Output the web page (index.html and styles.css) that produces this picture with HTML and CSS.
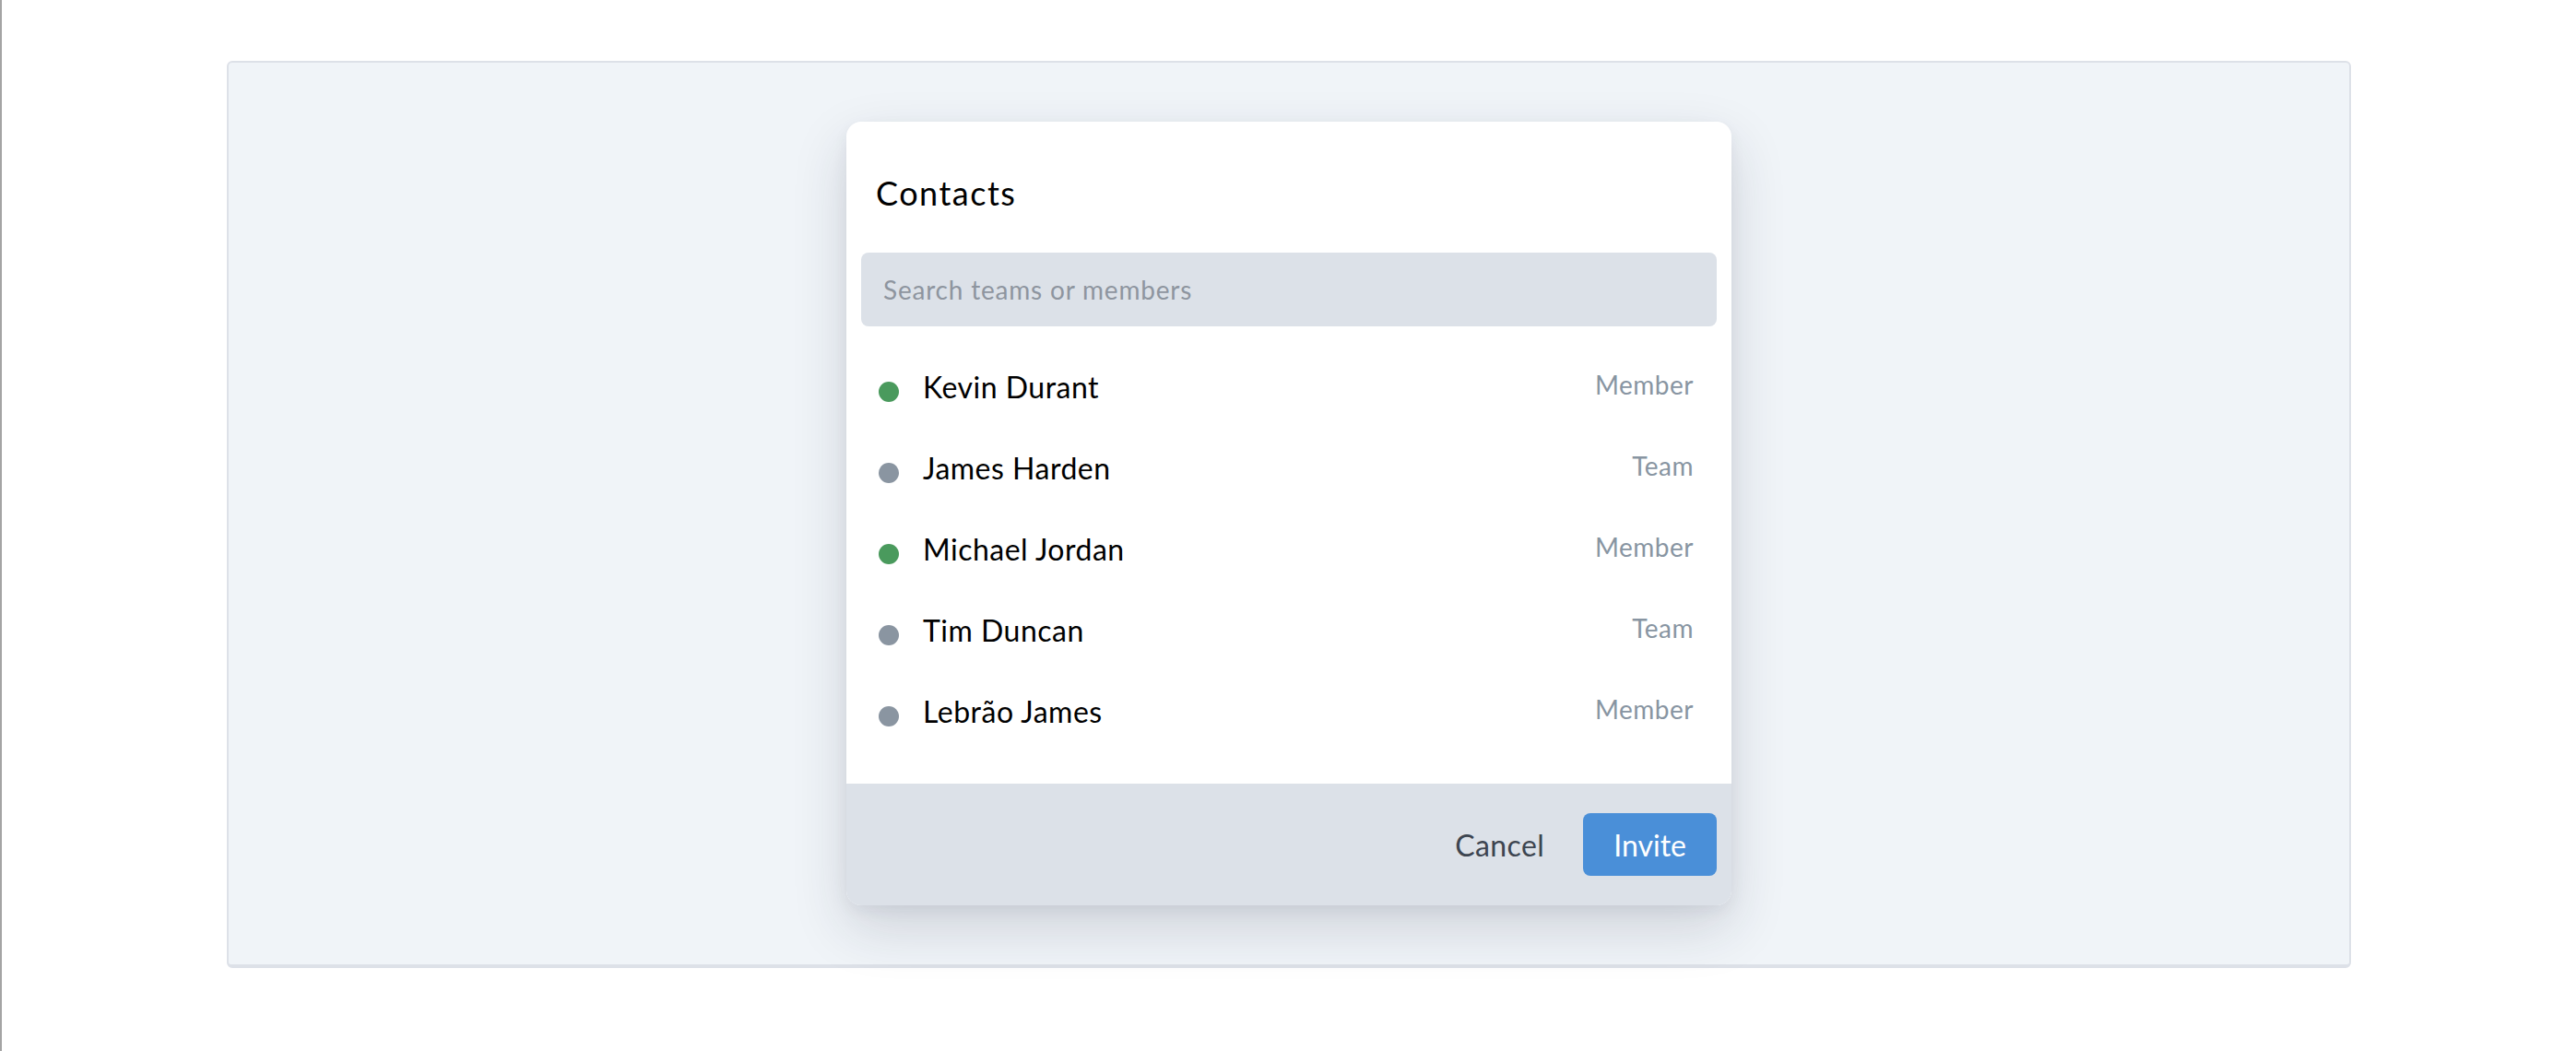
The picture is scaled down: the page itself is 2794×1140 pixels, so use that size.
FILE: index.html
```html
<!DOCTYPE html>
<html lang="en">
<head>
<meta charset="utf-8">
<title>Contacts</title>
<link rel="stylesheet" href="styles.css">
</head>
<body>
<div class="page">
  <div class="panel">
    <div class="modal">
      <h2 class="modal-title">Contacts</h2>
      <input class="search" type="text" placeholder="Search teams or members">
      <ul class="list">
        <li class="row"><span class="dot dot-online"></span><span class="name">Kevin Durant</span><span class="role">Member</span></li>
        <li class="row"><span class="dot dot-offline"></span><span class="name">James Harden</span><span class="role">Team</span></li>
        <li class="row"><span class="dot dot-online"></span><span class="name">Michael Jordan</span><span class="role">Member</span></li>
        <li class="row"><span class="dot dot-offline"></span><span class="name">Tim Duncan</span><span class="role">Team</span></li>
        <li class="row"><span class="dot dot-offline"></span><span class="name">Lebrão James</span><span class="role">Member</span></li>
      </ul>
      <div class="footer">
        <button class="btn-cancel" type="button">Cancel</button>
        <button class="btn-invite" type="button">Invite</button>
      </div>
    </div>
  </div>
</div>
</body>
</html>
```
FILE: styles.css
```css
html, body {
  margin: 0;
  padding: 0;
  background: #ffffff;
}
body {
  font-family: Lato, "Open Sans", "Noto Sans", sans-serif;
  color: #000;
}
.page {
  box-sizing: border-box;
  min-height: 1140px;
  border-left: 2px solid #a4a4a4;
  padding-top: 66px;
}
.panel {
  box-sizing: border-box;
  width: 2304px;
  margin: 0 auto;
  background: #f0f4f8;
  border: 2px solid #dde1e8;
  border-bottom-width: 4px;
  border-radius: 6px;
  padding: 64px 0;
}
.modal {
  width: 960px;
  margin: 0 auto;
  background: #ffffff;
  border-radius: 16px;
  overflow: hidden;
  box-shadow: 0 24px 60px rgba(30, 40, 60, 0.16), 0 6px 16px rgba(30, 40, 60, 0.06);
}
.modal-title {
  margin: 0;
  padding: 50px 32px 38px;
  font-size: 36px;
  line-height: 54px;
  font-weight: 400;
  letter-spacing: 1.5px;
  color: #000;
}
.search {
  display: block;
  box-sizing: border-box;
  width: 928px;
  height: 80px;
  margin: 0 16px;
  padding: 0 24px;
  border: none;
  outline: none;
  border-radius: 8px;
  background: #dce1e8;
  font-family: inherit;
  font-size: 28px;
  letter-spacing: 0.8px;
  color: #333;
}
.search::placeholder {
  color: #8e959f;
}
.list {
  list-style: none;
  margin: 0;
  padding: 23px 0 33px;
}
.row {
  display: flex;
  align-items: center;
  height: 88px;
  padding: 0 41px 0 35px;
}
.dot {
  flex: none;
  width: 22px;
  height: 22px;
  border-radius: 50%;
  margin-top: 8px;
  margin-right: 26px;
}
.dot-online {
  background: #4a9a5d;
}
.dot-offline {
  background: #8a95a1;
}
.name {
  font-size: 32px;
  letter-spacing: 0.5px;
  margin-bottom: 4px;
  color: #000;
}
.role {
  margin-left: auto;
  margin-bottom: 8px;
  font-size: 28px;
  letter-spacing: 0.5px;
  color: #8895a2;
}
.footer {
  display: flex;
  justify-content: flex-end;
  align-items: center;
  padding: 32px 16px;
  background: #dce1e8;
}
.btn-cancel {
  font-family: inherit;
  font-size: 32px;
  letter-spacing: 0.4px;
  color: #3d4550;
  background: none;
  border: none;
  padding: 0;
  margin-right: 42px;
  cursor: pointer;
}
.btn-invite {
  font-family: inherit;
  font-size: 32px;
  color: #ffffff;
  background: #4a8fd8;
  border: none;
  border-radius: 8px;
  height: 68px;
  padding: 0 33px;
  cursor: pointer;
}
```
